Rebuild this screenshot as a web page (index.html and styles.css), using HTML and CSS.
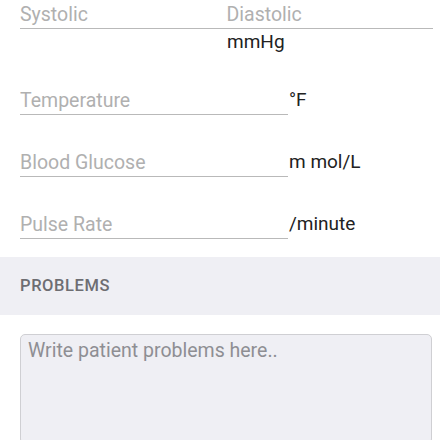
FILE: index.html
```html
<!DOCTYPE html>
<html lang="en">
<head>
  <meta charset="UTF-8" />
  <meta name="viewport" content="width=device-width, initial-scale=1.0"/>
  <title>Vitals</title>
  <link rel="stylesheet" href="styles.css">
</head>
<body>

<div class="vitals">
  <div class="bp">
    <input class="bp-field" type="text" placeholder="Systolic" />
    <input class="bp-field" type="text" placeholder="Diastolic" />
  </div>
  <div class="bp-unit">mmHg</div>

  <div class="vital">
    <input class="vital-field" type="text" placeholder="Temperature" />
    <span class="unit">°F</span>
  </div>
  <div class="vital">
    <input class="vital-field" type="text" placeholder="Blood Glucose" />
    <span class="unit">m mol/L</span>
  </div>
  <div class="vital">
    <input class="vital-field" type="text" placeholder="Pulse Rate" />
    <span class="unit">/minute</span>
  </div>
</div>

<div class="section-head">PROBLEMS</div>

<div class="notes">
  <textarea placeholder="Write patient problems here.."></textarea>
</div>

</body>
</html>
```

FILE: styles.css
```css
body {
  font-family: Roboto, "Noto Sans", sans-serif;
  background: #fff;
  color: #222;
  margin: 0;
  overflow: hidden;
}
input, textarea {
  font-family: inherit;
  outline: none;
}
input::placeholder {
  color: #b0b0b0;
}
.vitals {
  padding: 0 7px 0 20px;
}
.bp {
  display: flex;
  border-bottom: 1px solid #b9b9b9;
}
.bp-field {
  flex: 1;
  width: 0;
  border: none;
  padding: 3px 0 1px;
  height: 24px;
  line-height: 24px;
  font-size: 19.5px;
  background: transparent;
}
.bp-unit {
  padding: 2px 0 0 207px;
  height: 22px;
  line-height: 22px;
  font-size: 19px;
}
.vital {
  display: flex;
  align-items: flex-end;
  height: 62px;
}
.vital-field {
  width: 268px;
  border: none;
  border-bottom: 1px solid #b9b9b9;
  padding: 0 0 1px;
  height: 24px;
  line-height: 24px;
  font-size: 19.5px;
  background: transparent;
}
.unit {
  font-size: 19px;
  line-height: 24px;
  padding-left: 1px;
  margin-bottom: 3px;
}
.section-head {
  margin-top: 18px;
  height: 58px;
  line-height: 58px;
  background: #efeff4;
  color: #6d6d72;
  font-size: 16.5px;
  font-weight: 500;
  letter-spacing: 0.6px;
  padding: 0 20px;
}
.notes {
  padding: 19px 8px 0 20px;
}
textarea {
  display: block;
  width: 100%;
  box-sizing: border-box;
  height: 110px;
  background: #efeff4;
  border: 1px solid #cfcfd3;
  border-radius: 5px;
  padding: 4px 7px;
  font-size: 19.5px;
  resize: none;
}
textarea::placeholder {
  color: #8e8e93;
}
```
